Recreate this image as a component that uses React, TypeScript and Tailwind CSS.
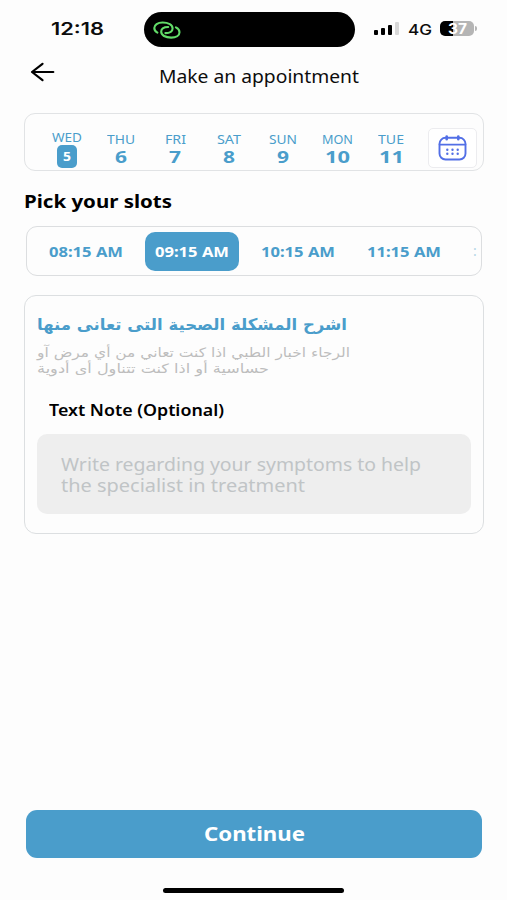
import { useLayoutEffect, useRef } from "react";
import clsx from "clsx";

type FitTextProps = {
  children: string;
  className?: string;
  rtl?: boolean;
};

/* Widens or narrows one line of text so that it fills its box. */
function FitText({ children, className, rtl = false }: FitTextProps) {
  const box = useRef<HTMLSpanElement>(null);
  const line = useRef<HTMLSpanElement>(null);

  useLayoutEffect(() => {
    if (!box.current || !line.current) return;
    line.current.style.transform = "none";
    const natural = line.current.getBoundingClientRect().width;
    const wanted = box.current.getBoundingClientRect().width;
    line.current.style.transform = `scaleX(${wanted / natural})`;
  }, [children]);

  return (
    <span ref={box} className={clsx("block shrink-0 whitespace-nowrap text-left", className)}>
      <span ref={line} dir={rtl ? "rtl" : "ltr"} className="inline-block origin-left align-top">
        {children}
      </span>
    </span>
  );
}

const days = [
  { name: "WED", date: "5", nameWidth: "w-[30px]", dateWidth: "w-[8px]", selected: true },
  { name: "THU", date: "6", nameWidth: "w-[28px]", dateWidth: "w-[12px]" },
  { name: "FRI", date: "7", nameWidth: "w-[21px]", dateWidth: "w-[12px]" },
  { name: "SAT", date: "8", nameWidth: "w-[24px]", dateWidth: "w-[12px]" },
  { name: "SUN", date: "9", nameWidth: "w-[28px]", dateWidth: "w-[12px]" },
  { name: "MON", date: "10", nameWidth: "w-[31px]", dateWidth: "w-[25px]" },
  { name: "TUE", date: "11", nameWidth: "w-[26px]", dateWidth: "w-[25px]" },
];

const slots = [
  { time: "08:15 AM" },
  { time: "09:15 AM", selected: true },
  { time: "10:15 AM" },
  { time: "11:15 AM" },
];

function StatusBar() {
  return (
    <div className="flex h-[47px] items-start pt-3">
      <FitText className="ml-[51px] w-[53px] font-[Inter,sans-serif] text-[17px] font-semibold leading-[35px]">
        12:18
      </FitText>
      <div className="ml-10 flex h-[35px] w-[211px] items-center rounded-full bg-black pl-[9px]">
        <svg width="28" height="20" viewBox="0 0 28 20" fill="none" stroke="#62dc68" strokeWidth="2.1" strokeLinecap="round">
          <path d="M4.4 12.6C2.4 11.5 1.3 9.8 1.3 8C1.3 4.9 4.6 2.5 9.6 2.5C15.4 2.5 19.6 4.9 19.6 8.4C19.6 11.2 17 13.1 12.4 13.1" />
          <path d="M22.9 7.4C25.3 8.5 26.5 10.2 26.5 12.2C26.5 15.3 23.2 17.6 18.2 17.6C12.4 17.6 8.2 15.2 8.2 11.8C8.2 8.9 10.8 7 15.2 7" />
        </svg>
      </div>
      <div className="ml-[19px] mt-[10px] flex h-[13px] items-end gap-[3px]">
        <i className="h-[5px] w-1 rounded-[1px] bg-black" />
        <i className="h-[7px] w-1 rounded-[1px] bg-black" />
        <i className="h-[10px] w-1 rounded-[1px] bg-black" />
        <i className="h-[13px] w-1 rounded-[1px] bg-[#d8d8d8]" />
      </div>
      <FitText className="ml-[9px] w-[24px] font-[Inter,sans-serif] text-[15px] font-medium leading-[35px]">4G</FitText>
      <div className="ml-2 mt-[9px] flex h-[15px] w-[34px] items-center justify-center rounded-[5px] bg-[linear-gradient(90deg,#000_37%,#b5b5b5_37%)]">
        <FitText className="w-[19px] font-[Inter,sans-serif] text-[14px] font-bold leading-[15px] text-white">37</FitText>
      </div>
      <i className="ml-px mt-[14px] h-[5px] w-[2px] rounded-r-full bg-[#b5b5b5]" />
    </div>
  );
}

function CalendarIcon() {
  return (
    <svg width="29" height="27" viewBox="0 0 29 27" fill="none" stroke="#526fe6" strokeWidth="1.9" strokeLinecap="round">
      <rect x="1.5" y="2.8" width="26" height="21.7" rx="6" />
      <path d="M1.5 9.6H27.5" strokeWidth="1.6" />
      <path d="M8.7 1.5V4.2M20.3 1.5V4.2" strokeWidth="2.6" />
      <path d="M9.3 14.8h.01M14.5 14.8h.01M19.7 14.8h.01M9.3 18.8h.01M14.5 18.8h.01M19.7 18.8h.01" strokeWidth="2.4" />
    </svg>
  );
}

export default function App() {
  return (
    <main className="flex h-[900px] w-[507px] flex-col overflow-hidden bg-[#fdfdfd] font-['Noto_Sans','DejaVu_Sans',sans-serif] text-[#0c0c0c]">
      <StatusBar />

      <header className="flex h-[66px] items-start">
        <svg className="ml-[30px] mt-[15px]" width="25" height="20" viewBox="0 0 25 20" fill="none" stroke="#000" strokeWidth="2.2" strokeLinecap="round" strokeLinejoin="round">
          <path d="M12.5 1.8L2 10L12.5 18.2M2 10H23.3" />
        </svg>
        <FitText className="ml-[104px] mt-[14px] w-[200px] text-[18px] leading-[30px]">Make an appointment</FitText>
      </header>

      <section className="mx-6 flex h-[58px] w-[460px] shrink-0 rounded-[11px] border border-[#e1e3e5] pl-[15px] text-[#4a9dcb]">
        {days.map((day) => (
          <div key={day.name} className={clsx("flex w-[54px] flex-col items-center", day.selected ? "pt-[16px]" : "pt-[18px]")}>
            <FitText className={clsx("text-[12.5px] leading-[15px]", day.nameWidth)}>{day.name}</FitText>
            {day.selected ? (
              <div className="flex h-[23px] w-5 items-center justify-center rounded-[5px] bg-[#4a9dcb] text-white">
                <FitText className={clsx("text-[12px] font-bold leading-[23px]", day.dateWidth)}>{day.date}</FitText>
              </div>
            ) : (
              <FitText className={clsx("text-[16px] font-bold leading-[20px]", day.dateWidth)}>{day.date}</FitText>
            )}
          </div>
        ))}
        <button className="ml-[10px] mt-[14px] flex h-[40px] w-[49px] items-center justify-center rounded-[5px] border border-[#ececef] bg-white">
          <CalendarIcon />
        </button>
      </section>

      <h2 className="ml-6 mt-[15px] text-[18px] font-bold leading-[30px] text-black">
        <FitText className="w-[148px]">Pick your slots</FitText>
      </h2>

      <section className="ml-[26px] mt-[10px] flex h-[50px] w-[456px] shrink-0 items-center gap-3 overflow-hidden rounded-[11px] border border-[#dcdee0] pl-3 text-[#4a9dcb]">
        {slots.map((slot) => (
          <button
            key={slot.time}
            className={clsx(
              "flex h-[39px] w-[94px] shrink-0 items-center justify-center rounded-[10px]",
              slot.selected && "bg-[#4a9dcb] text-white",
            )}
          >
            <FitText className="w-[74px] text-[14.5px] font-bold leading-5">{slot.time}</FitText>
          </button>
        ))}
        <span className="ml-[10px] text-[14px] leading-5 text-[#b4d5e6]">:</span>
      </section>

      <section className="ml-6 mt-[19px] flex h-[239px] w-[460px] shrink-0 flex-col rounded-[12px] border border-[#dcdfe1] pl-3">
        <FitText rtl className="mt-[18px] w-[310px] font-['DejaVu_Sans',sans-serif] text-[16px] font-bold leading-[22px] text-[#4a9dcb]">
          اشرح المشكلة الصحية التى تعانى منها
        </FitText>
        <div className="mt-[9px] font-['DejaVu_Sans',sans-serif] text-[13px] leading-4 text-[#bdbdbd]">
          <FitText rtl className="w-[313px]">الرجاء اخبار الطبي اذا كنت تعاني من أي مرض آو</FitText>
          <FitText rtl className="w-[232px]">حساسية أو اذا كنت تتناول أى أدوية</FitText>
        </div>
        <FitText className="ml-3 mt-[21px] w-[175px] text-[16px] font-semibold leading-6 text-black">
          Text Note (Optional)
        </FitText>
        <div className="mt-3 h-[80px] w-[434px] rounded-[10px] bg-[#eeeeee] pl-6 pt-5 text-[18px] leading-[20.5px] text-[#c0c4c6]">
          <FitText className="w-[360px]">Write regarding your symptoms to help</FitText>
          <FitText className="w-[244px]">the specialist in treatment</FitText>
        </div>
      </section>

      <button className="ml-[26px] mt-auto flex h-[48px] w-[456px] shrink-0 items-center justify-center rounded-[11px] bg-[#4a9dcb] text-white">
        <FitText className="w-[101px] text-[20px] font-bold leading-[28px]">Continue</FitText>
      </button>
      <div className="mb-[7px] ml-[163px] mt-[30px] h-[5px] w-[181px] shrink-0 rounded-full bg-black" />
    </main>
  );
}
